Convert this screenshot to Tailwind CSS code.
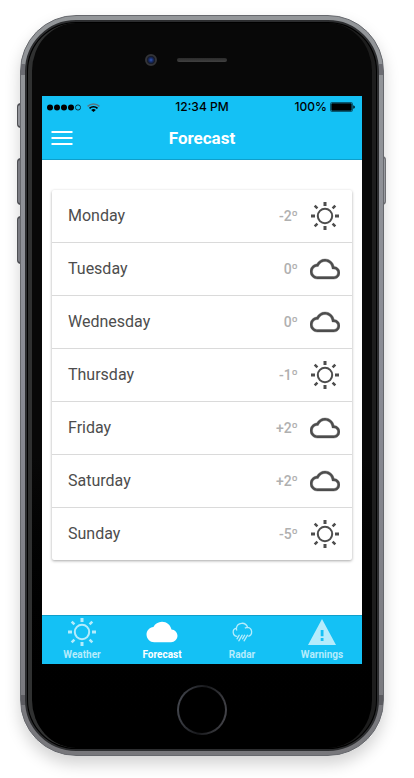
<!DOCTYPE html>
<html lang="en">
<head>
<meta charset="utf-8">
<meta name="viewport" content="width=device-width, initial-scale=1">
<title>Forecast</title>
<script src="https://cdn.jsdelivr.net/npm/@tailwindcss/browser@4"></script>
</head>
<body class="bg-white pt-[15px] pb-[22px] pl-5 pr-[30px] font-['Roboto',sans-serif]">

<svg class="hidden" aria-hidden="true">
  <symbol id="sun" viewBox="0 0 30 30">
    <circle cx="15" cy="15" r="7.2" fill="none" stroke="currentColor" stroke-width="2"/>
    <path fill="none" stroke="currentColor" stroke-width="3" d="M15 1v4M15 25v4M1 15h4M25 15h4"/>
    <path fill="none" stroke="currentColor" stroke-width="2.600" d="M4.700 4.700l2.700 2.700M22.600 22.600l2.700 2.700M25.300 4.700l-2.700 2.700M7.400 22.600l-2.700 2.700"/>
  </symbol>
  <symbol id="cloud" viewBox="0 0 24 24">
    <path fill="currentColor" stroke="currentColor" stroke-width=".3" d="M19.35 10.04C18.67 6.59 15.64 4 12 4 9.11 4 6.6 5.64 5.35 8.04 2.34 8.36 0 10.91 0 14c0 3.31 2.69 6 6 6h13c2.76 0 5-2.24 5-5 0-2.64-2.05-4.78-4.65-4.96zM19 18H6c-2.21 0-4-1.79-4-4 0-2.05 1.53-3.76 3.56-3.97l1.07-.11.5-.95C8.08 7.14 9.94 6 12 6c2.62 0 4.88 1.86 5.39 4.43l.3 1.5 1.53.11c1.56.1 2.78 1.41 2.78 2.96 0 1.65-1.35 3-3 3z"/>
  </symbol>
</svg>

<div class="relative">
  <!-- Side buttons -->
  <span class="absolute -left-[3px] top-[88px] h-[25px] w-1 rounded-l-sm border-y-2 border-l border-[#55565b] bg-[#a0a2a8]"></span>
  <span class="absolute -left-[3px] top-[143px] h-[47px] w-1 rounded-l-sm border-y-2 border-l border-[#55565b] bg-[#85878e]"></span>
  <span class="absolute -left-[3px] top-[201px] h-[48px] w-1 rounded-l-sm border-y-2 border-l border-[#55565b] bg-[#85878e]"></span>
  <span class="absolute -right-[2px] top-[141px] h-[49px] w-1 rounded-r-sm border-y-2 border-r border-[#77787d] bg-[#a8aab0]"></span>

  <!-- Phone body -->
  <div class="relative rounded-[56px] border border-[#66686d] bg-linear-to-b from-[#939699] via-[#898b94] to-[#77777b] p-1 shadow-[0_8px_16px_rgba(0,0,0,0.18)]">
    <span class="absolute left-0 top-12 h-[11px] w-1 bg-[#6b6c72]"></span>
    <span class="absolute right-0 top-12 h-[11px] w-1 bg-[#6b6c72]"></span>
    <span class="absolute left-0 bottom-[50px] h-[10px] w-1 bg-[#5b5b60]"></span>
    <span class="absolute right-0 bottom-[50px] h-[10px] w-1 bg-[#5b5b60]"></span>
    <div class="rounded-[51px] border-2 border-[#2c2d2f] bg-black p-px">
      <div class="rounded-[48px] border-x-4 border-l-[#303131] border-r-[#1d1d1d] bg-linear-to-b from-[#080808] from-60% to-black px-[10px]">

        <!-- Camera and speaker -->
        <div class="grid h-[73px] grid-cols-[1fr_50px_1fr] items-center">
          <span class="mr-5 size-3 justify-self-end rounded-full border-2 border-[#333438] bg-[radial-gradient(circle,#2f55b5_0%,#172b66_35%,#15161c_70%)]"></span>
          <span class="h-1 rounded-full bg-linear-to-b from-[#2b2b2b] to-[#414141]"></span>
        </div>

        <!-- Screen -->
        <div class="flex min-h-[568px] flex-col bg-white text-[#4d4d4d]">
          <header class="border-b border-[#0f9fcb] bg-[#14c1f5]">
            <div class="grid h-[22px] grid-cols-[1fr_auto_1fr] items-center px-[5px] font-['Inter',sans-serif] text-xs font-medium text-black">
              <div class="flex items-center gap-[6px]">
                <svg class="h-[7px] w-[34px]" viewBox="0 0 34 7" role="img" aria-label="Signal">
                  <circle cx="3" cy="3.5" r="3"/><circle cx="10" cy="3.5" r="3"/><circle cx="17" cy="3.5" r="3"/><circle cx="24" cy="3.5" r="3"/>
                  <circle cx="31" cy="3.5" r="2.6" fill="none" stroke="#000" stroke-width=".7"/>
                </svg>
                <svg class="h-[9px] w-[13px]" viewBox="0 0 13 9" fill="none" stroke="#000" stroke-width="1.6" role="img" aria-label="Wi-Fi">
                  <path stroke="#5b7782" d="M.6 3.3a8.6 8.6 0 0 1 11.8 0"/>
                  <path d="M2.5 5.3a5.8 5.8 0 0 1 8 0"/>
                  <path fill="#000" stroke="none" d="M4.2 7a3.4 3.4 0 0 1 4.6 0L6.5 9z"/>
                </svg>
              </div>
              <span>12:34 PM</span>
              <div class="flex items-center justify-end gap-[3px]">
                <span>100%</span>
                <svg class="mr-[2px] h-[10px] w-[25px]" viewBox="0 0 25 10" role="img" aria-label="Battery">
                  <rect x=".5" y=".5" width="22" height="9" rx="1.2" fill="none" stroke="#075a74"/>
                  <rect x="1.3" y="1.3" width="20.4" height="7.4" rx=".6"/>
                  <path d="M23.3 3.2q1.5.4 1.5 1.8t-1.5 1.8z"/>
                </svg>
              </div>
            </div>
            <div class="grid h-[41px] grid-cols-[40px_1fr_40px] items-center pb-px">
              <button type="button" aria-label="Menu" class="flex h-full items-center justify-center text-white">
                <svg class="h-[14px] w-[22px]" viewBox="0 0 22 14" fill="none" stroke="currentColor" stroke-width="2"><path d="M.5 1h21M.5 7h21M.5 13h21"/></svg>
              </button>
              <h1 class="text-center text-[17px] leading-5 font-bold text-white">Forecast</h1>
            </div>
          </header>

          <main class="flex-1 px-[10px] pt-[30px]">
            <ul class="divide-y divide-[#dadada] rounded-xs bg-white shadow-[0_1px_3px_rgba(0,0,0,0.35)]">
              <li class="flex h-[53px] items-center gap-3 pl-4 pr-3 last:h-[52px]"><span class="flex-1">Monday</span><span class="text-sm font-medium text-[#b0b0b0]">-2º</span><svg class="size-[30px]" role="img" aria-label="Sunny"><use href="#sun"/></svg></li>
              <li class="flex h-[53px] items-center gap-3 pl-4 pr-3 last:h-[52px]"><span class="flex-1">Tuesday</span><span class="text-sm font-medium text-[#b0b0b0]">0º</span><svg class="size-[30px]" role="img" aria-label="Cloudy"><use href="#cloud"/></svg></li>
              <li class="flex h-[53px] items-center gap-3 pl-4 pr-3 last:h-[52px]"><span class="flex-1">Wednesday</span><span class="text-sm font-medium text-[#b0b0b0]">0º</span><svg class="size-[30px]" role="img" aria-label="Cloudy"><use href="#cloud"/></svg></li>
              <li class="flex h-[53px] items-center gap-3 pl-4 pr-3 last:h-[52px]"><span class="flex-1">Thursday</span><span class="text-sm font-medium text-[#b0b0b0]">-1º</span><svg class="size-[30px]" role="img" aria-label="Sunny"><use href="#sun"/></svg></li>
              <li class="flex h-[53px] items-center gap-3 pl-4 pr-3 last:h-[52px]"><span class="flex-1">Friday</span><span class="text-sm font-medium text-[#b0b0b0]">+2º</span><svg class="size-[30px]" role="img" aria-label="Cloudy"><use href="#cloud"/></svg></li>
              <li class="flex h-[53px] items-center gap-3 pl-4 pr-3 last:h-[52px]"><span class="flex-1">Saturday</span><span class="text-sm font-medium text-[#b0b0b0]">+2º</span><svg class="size-[30px]" role="img" aria-label="Cloudy"><use href="#cloud"/></svg></li>
              <li class="flex h-[53px] items-center gap-3 pl-4 pr-3 last:h-[52px]"><span class="flex-1">Sunday</span><span class="text-sm font-medium text-[#b0b0b0]">-5º</span><svg class="size-[30px]" role="img" aria-label="Sunny"><use href="#sun"/></svg></li>
            </ul>
          </main>

          <nav class="grid h-[49px] grid-cols-4 border-t border-[#0f9fcb] bg-[#14c1f5] text-[10px] leading-3 font-bold text-[#b5ecfc]">
            <a href="#weather" class="flex flex-col items-center gap-px">
              <svg class="size-8" viewBox="0 0 32 32" aria-hidden="true"><use href="#sun" x="1" y="1" width="30" height="30"/></svg>
              <span>Weather</span>
            </a>
            <a href="#forecast" aria-current="page" class="flex flex-col items-center gap-px text-white">
              <svg class="size-8" viewBox="-.4 -.4 24.8 24.8" fill="currentColor" aria-hidden="true"><path d="M19.35 10.04C18.67 6.59 15.64 4 12 4 9.11 4 6.6 5.64 5.35 8.04 2.34 8.36 0 10.91 0 14c0 3.31 2.69 6 6 6h13c2.76 0 5-2.24 5-5 0-2.64-2.05-4.78-4.65-4.96z"/></svg>
              <span>Forecast</span>
            </a>
            <a href="#radar" class="flex flex-col items-center gap-px">
              <svg class="size-8" viewBox="0 0 32 32" fill="none" stroke="currentColor" stroke-width="1.3" aria-hidden="true">
                <path d="M11.300 20.300a4.100 4.100 0 0 1-.9-8.100 5.700 5.700 0 0 1 11.100-.9 4.600 4.600 0 0 1 .8 9M10.400 12.200q-.1 1.300.5 2.300M21.500 11.300q-1.500 0-2.600 1"/>
                <path stroke-linecap="round" d="M13.200 19.200l-2.200 3.600M16.200 19.200l-3.400 5.600M18.700 19.200l-2.200 3.600M21.500 19.200l-3.400 5.600"/>
              </svg>
              <span>Radar</span>
            </a>
            <a href="#warnings" class="flex flex-col items-center gap-px">
              <svg class="size-8" viewBox="0 0 32 32" fill="currentColor" fill-rule="evenodd" aria-hidden="true"><path d="M16 3L30 29H2zM14.700 14v6.300h2.800V14zM14.700 22v3h2.800v-3z"/></svg>
              <span>Warnings</span>
            </a>
          </nav>
        </div>

        <!-- Home button -->
        <div class="flex h-[84px] items-center justify-center pt-2">
          <button type="button" aria-label="Home" class="size-[50px] rounded-full bg-linear-[100deg] from-[#4a4d55] via-[#17181b] to-[#4b4b51] p-[2px]"><span class="block size-full rounded-full bg-black"></span></button>
        </div>
      </div>
    </div>
  </div>
</div>
</body>
</html>
